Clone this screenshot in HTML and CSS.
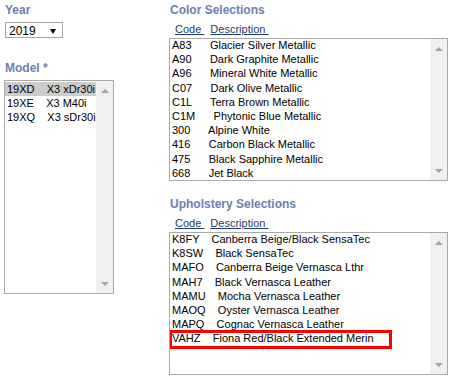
FILE: index.html
```html
<!DOCTYPE html>
<html lang="en">
<head>
    <meta charset="UTF-8">
    <title>Vehicle Selections</title>
    <link rel="stylesheet" href="styles.css">
</head>
<body>
    <div class="page">
        <div class="col-left">
            <h3 class="heading">Year</h3>
            <div class="year-select">
                <span>2019</span>
                <span class="caret"></span>
            </div>

            <h3 class="heading heading-model">Model *</h3>
            <div class="listbox listbox-model">
                <div class="items">
                    <div class="opt selected">19XD    X3 xDr30i</div>
                    <div class="opt">19XE    X3 M40i</div>
                    <div class="opt">19XQ    X3 sDr30i</div>
                </div>
                <div class="scrollbar"><span class="arrow-up"></span><span class="arrow-down"></span></div>
            </div>
        </div>

        <div class="col-right">
            <h3 class="heading">Color Selections</h3>
            <div class="list-head"><span class="col-code">Code </span><span>Description </span></div>
            <div class="listbox listbox-sel">
                <div class="items items-sel">
                    <div class="opt">A83      Glacier Silver Metallic</div>
                    <div class="opt">A90      Dark Graphite Metallic</div>
                    <div class="opt">A96      Mineral White Metallic</div>
                    <div class="opt">C07      Dark Olive Metallic</div>
                    <div class="opt">C1L      Terra Brown Metallic</div>
                    <div class="opt">C1M      Phytonic Blue Metallic</div>
                    <div class="opt">300      Alpine White</div>
                    <div class="opt">416      Carbon Black Metallic</div>
                    <div class="opt">475      Black Sapphire Metallic</div>
                    <div class="opt">668      Jet Black</div>
                </div>
                <div class="scrollbar"><span class="arrow-up"></span><span class="arrow-down"></span></div>
            </div>

            <h3 class="heading heading-uph">Upholstery Selections</h3>
            <div class="list-head"><span class="col-code">Code </span><span>Description </span></div>
            <div class="listbox listbox-sel">
                <div class="items items-sel">
                    <div class="opt">K8FY    Canberra Beige/Black SensaTec</div>
                    <div class="opt">K8SW    Black SensaTec</div>
                    <div class="opt">MAFO    Canberra Beige Vernasca Lthr</div>
                    <div class="opt">MAH7    Black Vernasca Leather</div>
                    <div class="opt">MAMU    Mocha Vernasca Leather</div>
                    <div class="opt">MAOQ    Oyster Vernasca Leather</div>
                    <div class="opt">MAPQ    Cognac Vernasca Leather</div>
                    <div class="opt marked">VAHZ    Fiona Red/Black Extended Merin</div>
                </div>
                <div class="scrollbar"><span class="arrow-up"></span><span class="arrow-down"></span></div>
            </div>
        </div>
    </div>
</body>
</html>
```

FILE: styles.css
```css
body {
    margin: 0;
    background: #ffffff;
    color: #000000;
    font-family: "Liberation Sans", Arial, sans-serif;
    font-size: 11px;
}

.page {
    display: flex;
    padding-left: 4px;
}

.col-left {
    width: 110px;
    display: flex;
    flex-direction: column;
}

.col-right {
    width: 279px;
    margin-left: 55px;
    display: flex;
    flex-direction: column;
}

.heading {
    margin: 3px 0 0 1px;
    font-size: 12px;
    font-weight: bold;
    line-height: 14px;
    color: #6c80aa;
}

.heading-model {
    margin-top: 23px;
}

.heading-uph {
    margin-top: 16px;
}

.year-select {
    width: 58px;
    height: 16px;
    box-sizing: border-box;
    margin: 5px 0 0 1px;
    padding: 1px 6px 0 3px;
    border: 1px solid #a5a5a5;
    display: flex;
    justify-content: space-between;
    align-items: flex-start;
    font-size: 12px;
    line-height: 14px;
}

.caret {
    margin-top: 5px;
    border-left: 3px solid transparent;
    border-right: 3px solid transparent;
    border-top: 5px solid #000;
}

.list-head {
    margin-top: 6px;
    padding-left: 6px;
    line-height: 13px;
    color: #1f3a6d;
    white-space: pre;
}

.list-head span {
    text-decoration: underline;
}

.col-code {
    margin-right: 6px;
}

.listbox {
    margin-top: 2px;
    border: 1px solid #a9a9a9;
    display: flex;
    box-sizing: border-box;
}

.listbox-model {
    margin-top: 5px;
    height: 214px;
}

.listbox-sel {
    height: 143px;
}

.items {
    flex: 1;
    overflow: hidden;
    padding-top: 1px;
}

.items-sel {
    padding-top: 0;
}

.opt {
    white-space: pre;
    padding-left: 2px;
    line-height: 14px;
}

.items-sel .opt {
    line-height: 12.2px;
    padding-bottom: 2px;
}

.selected {
    background: #cccccc;
}

.marked {
    position: relative;
}

/* red annotation box drawn over the last upholstery row */
.marked::after {
    content: "";
    position: absolute;
    left: -1px;
    top: -2px;
    width: 223px;
    height: 19px;
    box-sizing: border-box;
    border: 3px solid #ff0000;
}

.scrollbar {
    width: 17px;
    background: #f0f0f0;
    display: flex;
    flex-direction: column;
    justify-content: space-between;
    align-items: center;
    padding: 8px 0 7px;
    box-sizing: border-box;
}

.arrow-up {
    border-left: 4px solid transparent;
    border-right: 4px solid transparent;
    border-bottom: 4px solid #a3a3a3;
}

.arrow-down {
    border-left: 4px solid transparent;
    border-right: 4px solid transparent;
    border-top: 4px solid #a3a3a3;
}
```
